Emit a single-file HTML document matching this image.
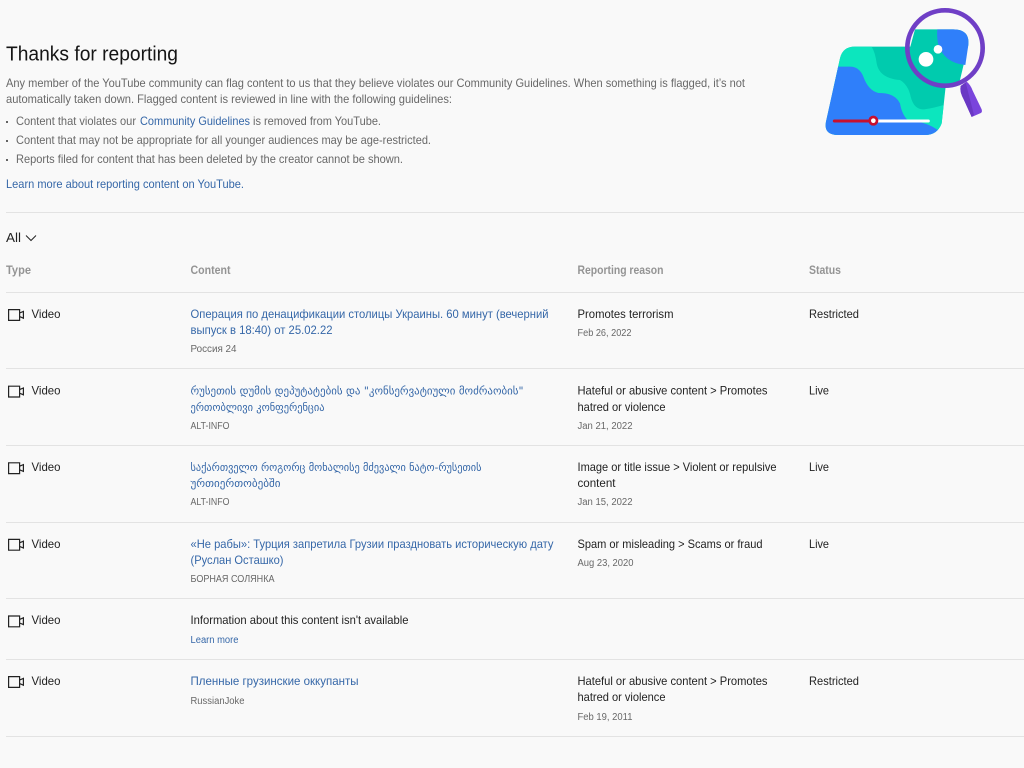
<!DOCTYPE html>
<html lang="en">
<head>
<meta charset="utf-8">
<title>Thanks for reporting</title>
<style>
html,body{margin:0;padding:0;background:#f9f9f9;width:1024px;height:768px;overflow:hidden}
svg{display:block;position:absolute;left:0;top:0}
text{font-family:"Liberation Sans","DejaVu Sans","Noto Sans CJK SC",sans-serif;font-size:12px;white-space:pre}
.g{fill:#686868}.k{fill:#222}.l{fill:#3567a8}.s{fill:#686868;font-size:10px}.h{fill:#949494;font-weight:bold}
.geo{font-family:"DejaVu Sans",sans-serif;font-size:11px}
.r{stroke:#e3e3e3;stroke-width:1}
.v{fill:none;stroke:#222;stroke-width:1.2}
</style>
</head>
<body>
<svg width="1024" height="768" viewBox="0 0 1024 768">
<rect width="1024" height="768" fill="#f9f9f9"/>

<text x="6" y="60.5" class="k" style="font-size:20px;fill:#151515" textLength="172" lengthAdjust="spacingAndGlyphs">Thanks for reporting</text>
<text x="6" y="87" class="g" textLength="739" lengthAdjust="spacingAndGlyphs">Any member of the YouTube community can flag content to us that they believe violates our Community Guidelines. When something is flagged, it’s not</text>
<text x="6" y="103" class="g" textLength="446" lengthAdjust="spacingAndGlyphs">automatically taken down. Flagged content is reviewed in line with the following guidelines:</text>

<circle cx="7" cy="122" r="1" fill="#333"/>
<circle cx="7" cy="141" r="1" fill="#333"/>
<circle cx="7" cy="160" r="1" fill="#333"/>
<text x="16" y="125" class="g" textLength="120" lengthAdjust="spacingAndGlyphs">Content that violates our</text>
<text x="140" y="125" class="l" textLength="110" lengthAdjust="spacingAndGlyphs">Community Guidelines</text>
<text x="253" y="125" class="g" textLength="128" lengthAdjust="spacingAndGlyphs">is removed from YouTube.</text>
<text x="16" y="144" class="g" textLength="415" lengthAdjust="spacingAndGlyphs">Content that may not be appropriate for all younger audiences may be age-restricted.</text>
<text x="16" y="163" class="g" textLength="387" lengthAdjust="spacingAndGlyphs">Reports filed for content that has been deleted by the creator cannot be shown.</text>
<text x="6" y="188" class="l" textLength="238" lengthAdjust="spacingAndGlyphs">Learn more about reporting content on YouTube.</text>

<line x1="6" x2="1024" y1="212.5" y2="212.5" class="r"/>

<text x="6" y="242" class="k" style="font-size:13px" textLength="15" lengthAdjust="spacingAndGlyphs">All</text>
<path d="M26 235.5l5 5 5-5" fill="none" stroke="#222" stroke-width="1"/>

<text x="6" y="274" class="h" textLength="25" lengthAdjust="spacingAndGlyphs">Type</text>
<text x="190.5" y="274" class="h" textLength="40" lengthAdjust="spacingAndGlyphs">Content</text>
<text x="577.5" y="274" class="h" textLength="86" lengthAdjust="spacingAndGlyphs">Reporting reason</text>
<text x="809" y="274" class="h" textLength="32" lengthAdjust="spacingAndGlyphs">Status</text>
<line x1="6" x2="1024" y1="292.5" y2="292.5" class="r"/>

<!-- Row 1 -->
<path class="v" d="M8.6 309.6h11v10.8h-11z M19.6 313l3.8-1.6v6.8l-3.8-1.6"/>
<text x="31.5" y="318" class="k" textLength="29" lengthAdjust="spacingAndGlyphs">Video</text>
<text x="190.5" y="318" class="l" textLength="358" lengthAdjust="spacingAndGlyphs">Операция по денацификации столицы Украины. 60 минут (вечерний</text>
<text x="190.5" y="334" class="l" textLength="142" lengthAdjust="spacingAndGlyphs">выпуск в 18:40) от 25.02.22</text>
<text x="190.5" y="352" class="s" textLength="46" lengthAdjust="spacingAndGlyphs">Россия 24</text>
<text x="577.5" y="318" class="k" textLength="96" lengthAdjust="spacingAndGlyphs">Promotes terrorism</text>
<text x="577.5" y="336" class="s" textLength="54" lengthAdjust="spacingAndGlyphs">Feb 26, 2022</text>
<text x="809" y="318" class="k" textLength="50" lengthAdjust="spacingAndGlyphs">Restricted</text>
<line x1="6" x2="1024" y1="368.5" y2="368.5" class="r"/>

<!-- Row 2 -->
<path class="v" d="M8.6 386.2h11v10.8h-11z M19.6 389.6l3.8-1.6v6.8l-3.8-1.6"/>
<text x="31.5" y="394.5" class="k" textLength="29" lengthAdjust="spacingAndGlyphs">Video</text>
<text x="190.5" y="394.5" class="l geo" textLength="333" lengthAdjust="spacingAndGlyphs">რუსეთის დუმის დეპუტატების და "კონსერვატიული მოძრაობის"</text>
<text x="190.5" y="411" class="l geo" textLength="134" lengthAdjust="spacingAndGlyphs">ერთობლივი კონფერენცია</text>
<text x="190.5" y="429" class="s" textLength="39" lengthAdjust="spacingAndGlyphs">ALT-INFO</text>
<text x="577.5" y="394.5" class="k" textLength="190" lengthAdjust="spacingAndGlyphs">Hateful or abusive content &gt; Promotes</text>
<text x="577.5" y="411" class="k" textLength="88" lengthAdjust="spacingAndGlyphs">hatred or violence</text>
<text x="577.5" y="429" class="s" textLength="55" lengthAdjust="spacingAndGlyphs">Jan 21, 2022</text>
<text x="809" y="394.5" class="k" textLength="20" lengthAdjust="spacingAndGlyphs">Live</text>
<line x1="6" x2="1024" y1="445.5" y2="445.5" class="r"/>

<!-- Row 3 -->
<path class="v" d="M8.6 462.8h11v10.8h-11z M19.6 466.2l3.8-1.6v6.8l-3.8-1.6"/>
<text x="31.5" y="471" class="k" textLength="29" lengthAdjust="spacingAndGlyphs">Video</text>
<text x="190.5" y="471" class="l geo" textLength="291" lengthAdjust="spacingAndGlyphs">საქართველო როგორც მოხალისე მძევალი ნატო-რუსეთის</text>
<text x="190.5" y="487" class="l geo" textLength="90" lengthAdjust="spacingAndGlyphs">ურთიერთობებში</text>
<text x="190.5" y="505" class="s" textLength="39" lengthAdjust="spacingAndGlyphs">ALT-INFO</text>
<text x="577.5" y="471" class="k" textLength="199" lengthAdjust="spacingAndGlyphs">Image or title issue &gt; Violent or repulsive</text>
<text x="577.5" y="487" class="k" textLength="38" lengthAdjust="spacingAndGlyphs">content</text>
<text x="577.5" y="505" class="s" textLength="55" lengthAdjust="spacingAndGlyphs">Jan 15, 2022</text>
<text x="809" y="471" class="k" textLength="20" lengthAdjust="spacingAndGlyphs">Live</text>
<line x1="6" x2="1024" y1="522.5" y2="522.5" class="r"/>

<!-- Row 4 -->
<path class="v" d="M8.6 539.4h11v10.8h-11z M19.6 542.8l3.8-1.6v6.8l-3.8-1.6"/>
<text x="31.5" y="548" class="k" textLength="29" lengthAdjust="spacingAndGlyphs">Video</text>
<text x="190.5" y="548" class="l" textLength="363" lengthAdjust="spacingAndGlyphs">«Не рабы»: Турция запретила Грузии праздновать историческую дату</text>
<text x="190.5" y="564" class="l" textLength="93" lengthAdjust="spacingAndGlyphs">(Руслан Осташко)</text>
<text x="190.5" y="582" class="s" textLength="84" lengthAdjust="spacingAndGlyphs">БОРНАЯ СОЛЯНКА</text>
<text x="577.5" y="548" class="k" textLength="185" lengthAdjust="spacingAndGlyphs">Spam or misleading &gt; Scams or fraud</text>
<text x="577.5" y="566" class="s" textLength="56" lengthAdjust="spacingAndGlyphs">Aug 23, 2020</text>
<text x="809" y="548" class="k" textLength="20" lengthAdjust="spacingAndGlyphs">Live</text>
<line x1="6" x2="1024" y1="598.5" y2="598.5" class="r"/>

<!-- Row 5 -->
<path class="v" d="M8.6 616h11v10.8h-11z M19.6 619.4l3.8-1.6v6.8l-3.8-1.6"/>
<text x="31.5" y="624" class="k" textLength="29" lengthAdjust="spacingAndGlyphs">Video</text>
<text x="190.5" y="624" class="k" textLength="218" lengthAdjust="spacingAndGlyphs">Information about this content isn't available</text>
<text x="190.5" y="643" class="l" style="font-size:10px" textLength="48" lengthAdjust="spacingAndGlyphs">Learn more</text>
<line x1="6" x2="1024" y1="659.5" y2="659.5" class="r"/>

<!-- Row 6 -->
<path class="v" d="M8.6 676.6h11v10.8h-11z M19.6 680l3.8-1.6v6.8l-3.8-1.6"/>
<text x="31.5" y="685" class="k" textLength="29" lengthAdjust="spacingAndGlyphs">Video</text>
<text x="190.5" y="685" class="l" textLength="168" lengthAdjust="spacingAndGlyphs">Пленные грузинские оккупанты</text>
<text x="190.5" y="704" class="s" textLength="54" lengthAdjust="spacingAndGlyphs">RussianJoke</text>
<text x="577.5" y="685" class="k" textLength="190" lengthAdjust="spacingAndGlyphs">Hateful or abusive content &gt; Promotes</text>
<text x="577.5" y="701" class="k" textLength="88" lengthAdjust="spacingAndGlyphs">hatred or violence</text>
<text x="577.5" y="720" class="s" textLength="55" lengthAdjust="spacingAndGlyphs">Feb 19, 2011</text>
<text x="809" y="685" class="k" textLength="50" lengthAdjust="spacingAndGlyphs">Restricted</text>
<line x1="6" x2="1024" y1="736.5" y2="736.5" class="r"/>

<!-- Illustration -->
<g transform="translate(800 0) scale(.33333)">
<defs>
<clipPath id="lens"><circle cx="435" cy="144" r="112"/></clipPath>
<clipPath id="map"><path d="M165 140H450L425 370Q412 405 375 405H115Q70 405 78 365L120 175Q128 140 165 140Z"/></clipPath>
</defs>
<path d="M165 140H450L425 370Q412 405 375 405H115Q70 405 78 365L120 175Q128 140 165 140Z" fill="#00cbae"/>
<g clip-path="url(#map)">
<path d="M100 130H208Q225 150 230 190Q238 235 300 240Q325 255 332 290Q342 330 372 328Q400 325 440 312V410H100Z" fill="#0ce6be"/>
<path d="M60 200H150Q178 200 190 230Q205 272 235 279Q285 278 300 310Q306 345 325 362Q380 365 416 392V410H60Z" fill="#2f7ffa"/>
</g>
<g clip-path="url(#lens)">
<rect x="318" y="85" width="240" height="180" fill="#f9f9f9"/>
<path d="M345 88H460Q510 88 505 135L480 240L445 270H320V140H331Z" fill="#00cbae"/>
<path d="M412 88H460Q510 88 505 135L496 195Q430 188 414 130Q410 108 412 88Z" fill="#2f7ffa"/>
<circle cx="378" cy="178" r="22" fill="#fff"/>
<circle cx="414" cy="148" r="13" fill="#fff"/>
</g>
<path d="M482 258L500 245Q512 255 518 272L545 328Q548 338 540 340L515 351L492 300Q478 275 482 258Z" fill="#7a45dc"/>
<path d="M482 258L497 247L522 345L515 351L492 300Q478 275 482 258Z" fill="#6a38c4"/>
<circle cx="435" cy="144" r="113" fill="none" stroke="#6f3fc6" stroke-width="14"/>
<path d="M103 363H220" stroke="#c8102e" stroke-width="9" stroke-linecap="round"/>
<path d="M235 363H385" stroke="#fff" stroke-width="9" stroke-linecap="round"/>
<circle cx="220" cy="362" r="15" fill="#c8102e"/>
<circle cx="220" cy="362" r="7" fill="#fff"/>
</g>
</svg>
</body>
</html>
